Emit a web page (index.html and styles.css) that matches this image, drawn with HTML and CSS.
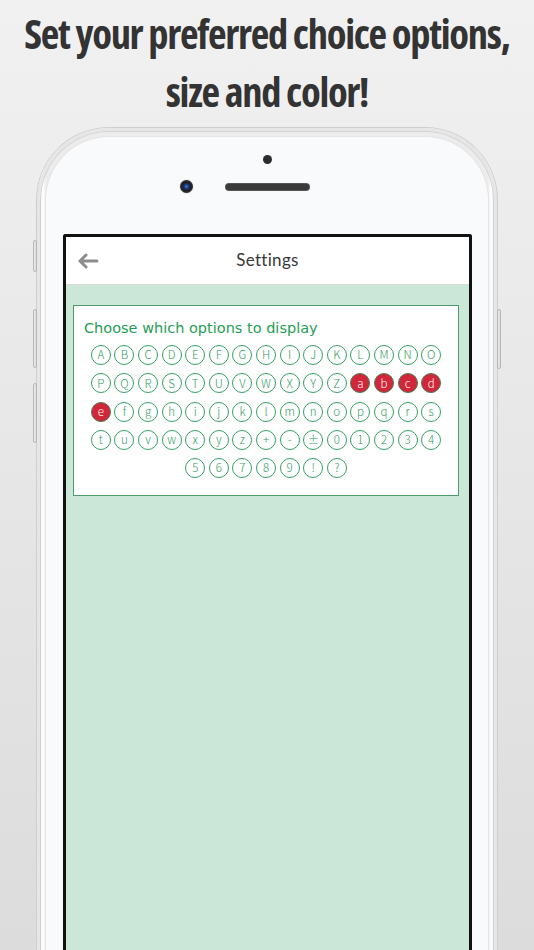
FILE: index.html
```html
<!DOCTYPE html>
<html>
<head>
<meta charset="utf-8">
<link rel="stylesheet" href="styles.css">
</head>
<body>
<h1 class="headline">Set your preferred choice options,<br>size and color!</h1>
<div class="phone">
  <span class="btn btn-l1"></span>
  <span class="btn btn-l2"></span>
  <span class="btn btn-l3"></span>
  <span class="btn btn-r1"></span>
  <div class="face">
    <div class="sensors">
      <span class="dot"></span>
      <div class="cam-row">
        <span class="camera"></span>
        <span class="speaker"></span>
      </div>
    </div>
    <div class="screen">
      <div class="appbar">
        <svg class="back" width="22" height="16" viewBox="0 0 22 16"><path d="M20 8H3M9 2L3 8l6 6" fill="none" stroke="#8c8c8c" stroke-width="3" stroke-linecap="round" stroke-linejoin="round"/></svg>
        <span class="title">Settings</span>
      </div>
      <div class="content">
        <div class="card">
          <div class="card-title">Choose which options to display</div>
          <div class="opts">
            <span class="o">A</span><span class="o">B</span><span class="o">C</span><span class="o">D</span><span class="o">E</span><span class="o">F</span><span class="o">G</span><span class="o">H</span><span class="o">I</span><span class="o">J</span><span class="o">K</span><span class="o">L</span><span class="o">M</span><span class="o">N</span><span class="o">O</span>
            <span class="o">P</span><span class="o">Q</span><span class="o">R</span><span class="o">S</span><span class="o">T</span><span class="o">U</span><span class="o">V</span><span class="o">W</span><span class="o">X</span><span class="o">Y</span><span class="o">Z</span><span class="o sel">a</span><span class="o sel">b</span><span class="o sel">c</span><span class="o sel">d</span>
            <span class="o sel">e</span><span class="o">f</span><span class="o">g</span><span class="o">h</span><span class="o">i</span><span class="o">j</span><span class="o">k</span><span class="o">l</span><span class="o">m</span><span class="o">n</span><span class="o">o</span><span class="o">p</span><span class="o">q</span><span class="o">r</span><span class="o">s</span>
            <span class="o">t</span><span class="o">u</span><span class="o">v</span><span class="o">w</span><span class="o">x</span><span class="o">y</span><span class="o">z</span><span class="o">+</span><span class="o">-</span><span class="o">±</span><span class="o">0</span><span class="o">1</span><span class="o">2</span><span class="o">3</span><span class="o">4</span>
            <span class="o">5</span><span class="o">6</span><span class="o">7</span><span class="o">8</span><span class="o">9</span><span class="o">!</span><span class="o">?</span>
          </div>
        </div>
      </div>
    </div>
  </div>
</div>
</body>
</html>
```

FILE: styles.css
```css
html, body {
  margin: 0;
  padding: 0;
}
body {
  width: 534px;
  height: 950px;
  overflow: hidden;
  background: linear-gradient(#f1f1f1, #dcdcdc);
}
.headline {
  margin: 0;
  padding-top: 5px;
  height: 123px;
  text-align: center;
  font-family: "Open Sans", sans-serif;
  font-stretch: 75%;
  font-weight: 700;
  font-size: 40.5px;
  line-height: 58px;
  color: #333333;
  letter-spacing: -1.3px;
}
.phone {
  position: relative;
  margin: 0 0 0 37px;
  width: 460px;
  height: 900px;
  box-sizing: border-box;
  border-radius: 72px 72px 0 0;
  background: linear-gradient(90deg, #c4c4c4 0px, #eeeeee 3px, #ffffff 6px, #ececec 9px, #ececec 451px, #ffffff 454px, #eeeeee 457px, #c4c4c4 460px);
  padding: 9px 9px 0 9px;
  box-shadow: 0 0 0 1px #cfcfcf;
}
.phone::before {
  content: "";
  position: absolute;
  inset: 0;
  border-radius: 72px 72px 0 0;
  border: 3px solid #e6e6e6;
  border-bottom: none;
  box-shadow: inset 0 0 0 1px #d2d2d2;
  pointer-events: none;
}
.btn {
  position: absolute;
  width: 4px;
  background: linear-gradient(90deg, #cfcfcf, #ffffff 50%, #bdbdbd);
  border: 1px solid #b8b8b8;
  box-sizing: border-box;
  border-radius: 2px;
}
.btn-l1 { left: -4px; top: 112px; height: 32px; }
.btn-l2 { left: -4px; top: 181px; height: 59px; }
.btn-l3 { left: -4px; top: 255px; height: 60px; }
.btn-r1 { right: -4px; top: 181px; height: 60px; }
.face {
  position: relative;
  height: 100%;
  background: #f9fafc;
  border-radius: 63px 63px 0 0;
  box-shadow: 0 0 0 1px #e4e4e4;
  padding: 0 16px 0 17px;
}
.sensors {
  height: 97px;
  display: flex;
  flex-direction: column;
  align-items: center;
}
.dot {
  margin-top: 18px;
  width: 9px;
  height: 9px;
  border-radius: 50%;
  background: #2c2c2c;
}
.cam-row {
  margin-top: 16px;
  margin-left: -46px;
  display: flex;
  align-items: center;
}
.camera {
  width: 13px;
  height: 13px;
  border-radius: 50%;
  background: radial-gradient(circle at 50% 50%, #4a7ad0 0px, #1b3e85 2px, #1c1c2a 4px, #2b2b2b 6px);
  box-shadow: 0 0 1px #777;
}
.speaker {
  margin-left: 33px;
  width: 83px;
  height: 6px;
  border-radius: 3px;
  background: #3a3a3a;
  box-shadow: 0 0 0 1px #555;
}
.screen {
  height: 800px;
  border: 3px solid #111111;
  border-radius: 3px 3px 0 0;
  border-bottom: none;
  background: #cbe7d8;
}
.appbar {
  position: relative;
  height: 47px;
  background: #ffffff;
  border-bottom: 1px solid #dcdcdc;
  display: flex;
  align-items: center;
  justify-content: center;
}
.back {
  position: absolute;
  left: 11px;
  top: 16px;
}
.title {
  font-family: "Lato", sans-serif;
  font-size: 17px;
  color: #383838;
  letter-spacing: 0.3px;
  margin-top: -2px;
}
.content {
  padding: 20px 10px 0 7px;
}
.card {
  background: #ffffff;
  border: 1px solid #4f9a6d;
  padding: 12px 0 17px 0;
}
.card-title {
  padding-left: 10px;
  font-family: "DejaVu Sans", sans-serif;
  font-size: 14.5px;
  line-height: 20px;
  color: #1f9d55;
  height: 20px;
}
.opts {
  margin: 7px auto 0;
  width: 352px;
  display: flex;
  flex-wrap: wrap;
  justify-content: center;
  column-gap: 3.6px;
  row-gap: 8.3px;
}
.o {
  width: 20px;
  height: 20px;
  box-sizing: border-box;
  border: 1.3px solid #34a065;
  border-radius: 50%;
  display: flex;
  align-items: center;
  justify-content: center;
  font-family: "Noto Sans CJK JP", sans-serif;
  font-size: 11.5px;
  font-weight: 300;
  line-height: 1;
  color: #2f9c5c;
}
.o.sel {
  background: #d0283a;
  border-color: #4a7a55;
  color: #ffffff;
}
```
